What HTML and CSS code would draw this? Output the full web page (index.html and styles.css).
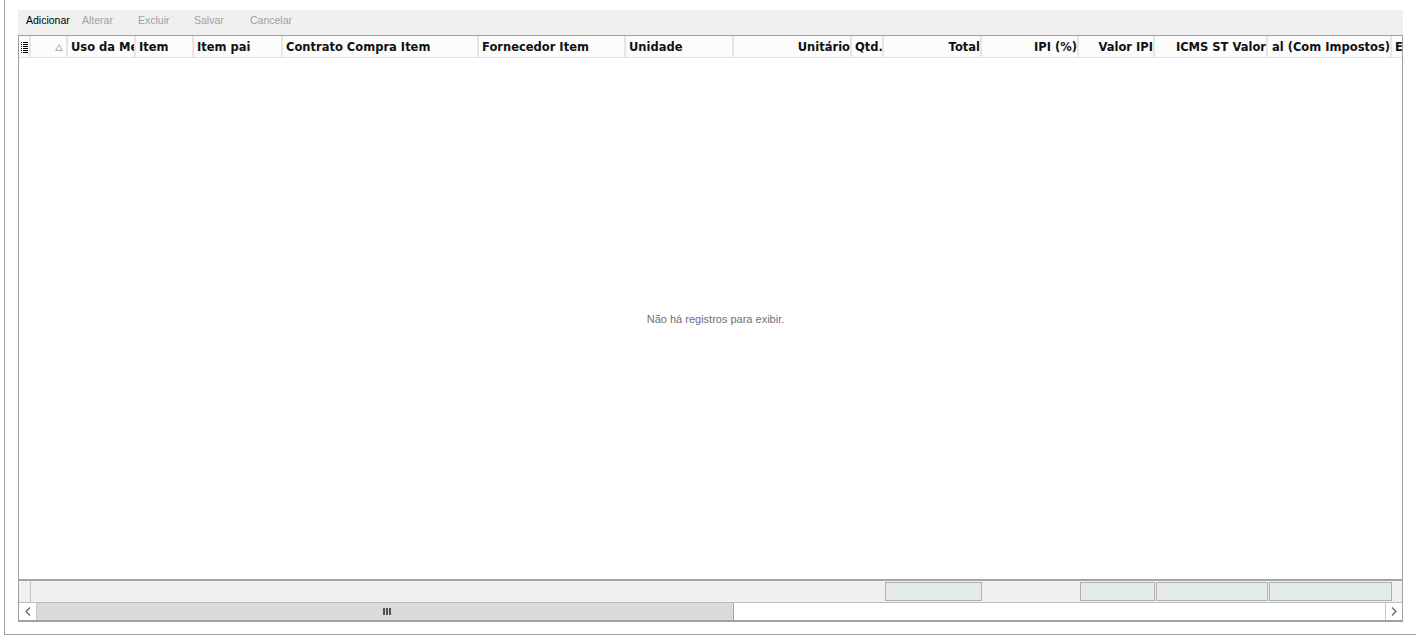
FILE: index.html
```html
<!DOCTYPE html>
<html>
  <head>
    <title>Itens</title>
    <link rel="stylesheet" href="styles.css">
  </head>
  <body>
    <div class="frame">

      <div class="toolbar">
        <span class="tool active">Adicionar</span>
        <span class="tool">Alterar</span>
        <span class="tool">Excluir</span>
        <span class="tool">Salvar</span>
        <span class="tool">Cancelar</span>
      </div>

      <div class="grid">
        <div class="header">
          <div class="col c-ind">
            <svg width="7" height="11" viewBox="0 0 7 11">
              <g fill="#000">
                <rect x="0" y="0" width="1" height="1"/><rect x="2" y="0" width="5" height="1"/>
                <rect x="0" y="2" width="1" height="1"/><rect x="2" y="2" width="5" height="1"/>
                <rect x="0" y="4" width="1" height="1"/><rect x="2" y="4" width="5" height="1"/>
                <rect x="0" y="6" width="1" height="1"/><rect x="2" y="6" width="5" height="1"/>
                <rect x="0" y="8" width="1" height="1"/><rect x="2" y="8" width="5" height="1"/>
                <rect x="0" y="10" width="1" height="1"/><rect x="2" y="10" width="5" height="1"/>
              </g>
            </svg>
          </div>
          <div class="col c-sort">
            <svg width="8" height="7" viewBox="0 0 8 7">
              <path d="M4 0.8 L7.3 6.5 L0.7 6.5 Z" fill="none" stroke="#a8a8a8" stroke-width="1"/>
            </svg>
          </div>
          <div class="col c-uso"><span class="cap">Uso da Mercadoria</span></div>
          <div class="col c-item"><span class="cap">Item</span></div>
          <div class="col c-pai"><span class="cap">Item pai</span></div>
          <div class="col c-contrato"><span class="cap">Contrato Compra Item</span></div>
          <div class="col c-forn"><span class="cap">Fornecedor Item</span></div>
          <div class="col c-unid"><span class="cap">Unidade</span></div>
          <div class="col c-unit num"><span class="cap"><span>Unitário</span></span></div>
          <div class="col c-qtd"><span class="cap">Qtd.</span></div>
          <div class="col c-total num"><span class="cap"><span>Total</span></span></div>
          <div class="col c-ipi num"><span class="cap"><span>IPI (%)</span></span></div>
          <div class="col c-vipi num"><span class="cap"><span>Valor IPI</span></span></div>
          <div class="col c-icms num"><span class="cap"><span>ICMS ST Valor</span></span></div>
          <div class="col c-geral num"><span class="cap"><span>Valor Total (Com Impostos)</span></span></div>
          <div class="col c-last"><span class="cap">Entrega</span></div>
        </div>

        <div class="rows">
          <span class="empty">Não há registros para exibir.</span>
        </div>

        <div class="footer">
          <div class="fcell c-ind sep"></div>
          <div class="fcell c-sort"></div>
          <div class="fcell c-uso"></div>
          <div class="fcell c-item"></div>
          <div class="fcell c-pai"></div>
          <div class="fcell c-contrato"></div>
          <div class="fcell c-forn"></div>
          <div class="fcell c-unid"></div>
          <div class="fcell c-unit"></div>
          <div class="fcell c-qtd"></div>
          <div class="fcell c-total"><div class="sum"></div></div>
          <div class="fcell c-ipi"></div>
          <div class="fcell c-vipi"><div class="sum"></div></div>
          <div class="fcell c-icms"><div class="sum"></div></div>
          <div class="fcell c-geral"><div class="sum"></div></div>
        </div>

        <div class="hscroll">
          <div class="arrow left">
            <svg width="6" height="9" viewBox="0 0 6 9"><path d="M5 0.5 L1 4.5 L5 8.5" fill="none" stroke="#606060" stroke-width="1.2"/></svg>
          </div>
          <div class="thumb">
            <span class="grip"><i></i><i></i><i></i></span>
          </div>
          <div class="track"></div>
          <div class="arrow right">
            <svg width="6" height="9" viewBox="0 0 6 9"><path d="M1 0.5 L5 4.5 L1 8.5" fill="none" stroke="#606060" stroke-width="1.2"/></svg>
          </div>
        </div>
      </div>

    </div>
  </body>
</html>
```

FILE: styles.css
```css
:root {
    --font: "Liberation Sans", Arial, sans-serif;
    --head-font: "DejaVu Sans", Verdana, sans-serif;
    --line: #a0a0a0;
    --sep: #e6e6e6;
    --panel: #f0f0f0;
}

* {
    box-sizing: border-box;
}

body {
    margin: 0;
    background: white;
    font: 11px var(--font);
}

.frame {
    margin-left: 4px;
    width: 1412px;
    height: 635px;
    border-left: 1px solid var(--line);
    border-bottom: 1px solid var(--line);
    padding: 10px 0 0 13px;
}

/* toolbar */

.toolbar {
    width: 1385px;
    height: 25px;
    background: var(--panel);
    display: flex;
}

.tool {
    width: 56px;
    padding-left: 8px;
    line-height: 20px;
    font-size: 10.5px;
    color: #a0a0a0;
    white-space: nowrap;
}

.tool.active {
    color: #000;
}

/* grid */

.grid {
    width: 1385px;
    height: 587px;
    border: 1px solid var(--line);
    border-bottom-width: 2px;
    display: flex;
    flex-direction: column;
}

.header {
    display: flex;
    height: 22px;
    background: #fcfcfc;
    border-bottom: 1px solid #e2e2e2;
    overflow: hidden;
}

.col {
    flex: none;
    display: flex;
    align-items: center;
    height: 21px;
    padding: 1px 0 0 3px;
    border-right: 2px solid var(--sep);
    font: bold 11.5px var(--head-font);
    color: #111;
    white-space: nowrap;
    overflow: hidden;
}

/* caption box clips its own text, so a long right-aligned
   caption loses its start instead of its end */
.cap {
    display: block;
    flex: 1;
    min-width: 0;
    overflow: hidden;
}

.num .cap {
    display: flex;
    justify-content: flex-end;
}

.num .cap span {
    flex: none;
}

.c-ind { width: 12px; }
.c-sort { width: 37px; }
.c-uso { width: 68px; }
.c-item { width: 58px; }
.c-pai { width: 89px; }
.c-contrato { width: 196px; }
.c-forn { width: 147px; }
.c-unid { width: 108px; }
.c-unit { width: 118px; }
.c-qtd { width: 32px; }
.c-total { width: 98px; }
.c-ipi { width: 97px; }
.c-vipi { width: 76px; }
.c-icms { width: 113px; }
.c-geral { width: 124px; }
.c-last { width: 30px; border-right: 0; }

.col.c-ind {
    padding: 1px 0 0 2px;
}

.col.c-sort {
    justify-content: flex-end;
    padding-right: 3px;
}

.col.c-geral {
    padding-left: 4px;
}

.rows {
    flex: 1;
    display: flex;
    align-items: center;
    justify-content: center;
    padding-left: 10px;
    background: white;
}

.empty {
    color: #6e6e7a;
}

/* summary row */

.footer {
    display: flex;
    height: 23px;
    background: var(--panel);
    border-top: 2px solid #a4a4a4;
    overflow: hidden;
}

.fcell {
    flex: none;
    height: 21px;
    padding: 1px 0 1px 1px;
}

.fcell.sep {
    border-right: 1px solid #c4c4c4;
}

.sum {
    height: 19px;
    background: #e5eaea;
    border: 1px solid #b0b0b0;
}

/* horizontal scrollbar */

.hscroll {
    display: flex;
    height: 18px;
    border-top: 1px solid #bdbdbd;
    background: white;
}

.arrow {
    width: 18px;
    display: flex;
    align-items: center;
    justify-content: center;
    background: white;
}

.arrow.left {
    border-right: 1px solid #c8c8c8;
}

.arrow.right {
    width: 17px;
    border-left: 1px solid #c8c8c8;
}

.thumb {
    width: 697px;
    background: #dadada;
    border-right: 1px solid #a8a8a8;
    display: flex;
    align-items: center;
    justify-content: center;
}

.grip {
    display: flex;
    gap: 1px;
    margin-left: 4px;
}

.grip i {
    width: 2px;
    height: 7px;
    background: #505050;
}

.track {
    flex: 1;
}
```
